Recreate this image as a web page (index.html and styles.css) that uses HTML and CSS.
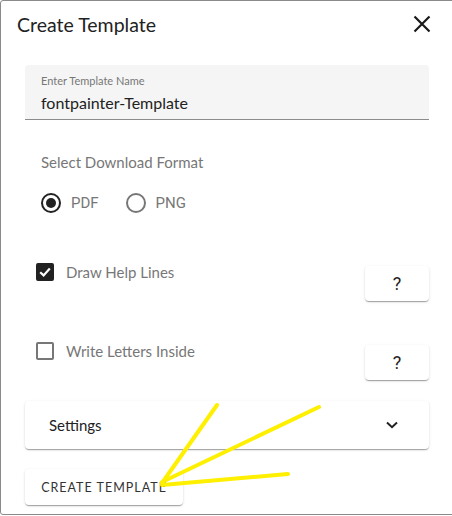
FILE: index.html
```html
<!DOCTYPE html>
<html lang="en">
<head>
    <meta charset="UTF-8">
    <meta name="viewport" content="width=device-width, initial-scale=1.0">
    <title>Create Template</title>
    <link rel="stylesheet" href="styles.css">
</head>
<body>
    <div class="dialog">
        <!-- Cabecera -->
        <div class="dialog-header">
            <h2>Create Template</h2>
            <button class="close-btn" aria-label="close">
                <svg width="18" height="18" viewBox="0 0 18 18">
                    <path d="M1.5 1.5 L16.5 16.5 M16.5 1.5 L1.5 16.5" stroke="#1a1a1a" stroke-width="2.2" fill="none"/>
                </svg>
            </button>
        </div>

        <div class="dialog-content">
            <!-- Nombre -->
            <div class="text-field">
                <label for="templateName">Enter Template Name</label>
                <input type="text" id="templateName" value="fontpainter-Template">
            </div>

            <!-- Formato -->
            <p class="format-title">Select Download Format</p>
            <div class="radio-row">
                <label class="radio">
                    <span class="radio-ring checked"><span class="radio-dot"></span></span>
                    PDF
                </label>
                <label class="radio">
                    <span class="radio-ring"></span>
                    PNG
                </label>
            </div>

            <!-- Opciones -->
            <div class="option-row first">
                <label class="check">
                    <span class="check-box checked">
                        <svg width="14" height="14" viewBox="0 0 14 14">
                            <path d="M2.2 7.2 L5.6 10.4 L11.8 3.6" stroke="#fff" stroke-width="2.2" fill="none"/>
                        </svg>
                    </span>
                    Draw Help Lines
                </label>
                <button class="help-btn">?</button>
            </div>

            <div class="option-row">
                <label class="check">
                    <span class="check-box"></span>
                    Write Letters Inside
                </label>
                <button class="help-btn">?</button>
            </div>

            <!-- Ajustes -->
            <div class="accordion">
                <span>Settings</span>
                <svg width="14" height="10" viewBox="0 0 14 10">
                    <path d="M2 2.5 L7 7.2 L12 2.5" stroke="#222" stroke-width="2" fill="none"/>
                </svg>
            </div>

            <button class="create-btn">CREATE TEMPLATE</button>
        </div>

        <!-- Flecha amarilla -->
        <svg class="arrow" width="452" height="516" viewBox="0 0 452 516">
            <g stroke="#ffef00" stroke-width="4" stroke-linecap="round" fill="none">
                <path d="M217 405 L162 483"/>
                <path d="M319 407 L162 482"/>
                <path d="M288 474 L162 485"/>
            </g>
        </svg>
    </div>
</body>
</html>
```

FILE: styles.css
```css
/* Estilos generales */
body {
    margin: 0;
    font-family: Lato, "Open Sans", sans-serif;
    background-color: #fff;
}

.dialog {
    position: relative;
    width: 460px;
    height: 515px;
    box-sizing: border-box;
    border: 1px solid #8a8a8a;
    border-radius: 3px 0 0 3px;
    background-color: #fff;
}

.dialog-header {
    display: flex;
    justify-content: space-between;
    align-items: center;
    height: 46px;
    padding: 0 21px 0 16px;
    width: 451px;
    box-sizing: border-box;
}

.dialog-header h2 {
    margin: 0;
    font-size: 19.5px;
    font-weight: 400;
    color: #222;
}

.close-btn {
    border: none;
    background: none;
    padding: 0;
    display: flex;
}

.dialog-content {
    width: 451px;
    box-sizing: border-box;
    padding: 18px 23px 0 24px;
}

/* Campo de texto */
.text-field {
    background-color: #f5f5f5;
    border-radius: 4px 4px 0 0;
    border-bottom: 1px solid #8c8c8c;
    height: 55px;
    box-sizing: border-box;
    padding: 9px 16px 0;
}

.text-field label {
    display: block;
    font-size: 11px;
    color: #777;
}

.text-field input {
    border: none;
    background: none;
    padding: 0;
    margin-top: 6px;
    font-family: inherit;
    font-size: 16px;
    color: #222;
    width: 100%;
    outline: none;
}

.format-title {
    margin: 33px 0 0 16px;
    font-size: 15px;
    color: #777;
}

/* Radios */
.radio-row {
    display: flex;
    gap: 27px;
    margin: 22px 0 0 16px;
}

.radio {
    display: flex;
    align-items: center;
    gap: 10px;
    font-family: Roboto, sans-serif;
    font-size: 15px;
    color: #777;
}

.radio-ring {
    width: 20px;
    height: 20px;
    box-sizing: border-box;
    border: 2px solid #777;
    border-radius: 50%;
    display: flex;
    justify-content: center;
    align-items: center;
}

.radio-ring.checked {
    border-color: #222;
}

.radio-dot {
    width: 10px;
    height: 10px;
    border-radius: 50%;
    background-color: #222;
}

/* Casillas */
.option-row {
    display: flex;
    justify-content: space-between;
    align-items: flex-start;
    margin-top: 41px;
}

.option-row.first {
    margin-top: 50px;
}

.check {
    display: flex;
    align-items: center;
    gap: 12px;
    margin-left: 11px;
    font-size: 15px;
    color: #777;
}

.check-box {
    width: 18px;
    height: 18px;
    box-sizing: border-box;
    border: 2px solid #777;
    border-radius: 2px;
    display: flex;
    justify-content: center;
    align-items: center;
}

.check-box.checked {
    background-color: #222;
    border-color: #222;
}

.help-btn {
    width: 64px;
    height: 35px;
    margin-top: 3px;
    border: none;
    border-radius: 4px;
    background-color: #fff;
    font-family: Roboto, sans-serif;
    font-size: 18px;
    color: #222;
    box-shadow: 0 2px 1px -1px rgba(0, 0, 0, 0.2), 0 1px 1px 0 rgba(0, 0, 0, 0.14), 0 1px 3px 0 rgba(0, 0, 0, 0.12);
}

/* Ajustes */
.accordion {
    display: flex;
    justify-content: space-between;
    align-items: center;
    height: 48px;
    margin-top: 21px;
    padding: 0 30px 0 24px;
    border-radius: 4px;
    background-color: #fff;
    font-size: 15px;
    color: #222;
    box-shadow: 0 2px 1px -1px rgba(0, 0, 0, 0.2), 0 1px 1px 0 rgba(0, 0, 0, 0.14), 0 1px 3px 0 rgba(0, 0, 0, 0.12);
}

.create-btn {
    margin-top: 20px;
    width: 158px;
    height: 36px;
    border: none;
    border-radius: 4px;
    background-color: #fff;
    font-family: inherit;
    font-size: 12.5px;
    letter-spacing: 1px;
    color: #333;
    box-shadow: 0 2px 1px -1px rgba(0, 0, 0, 0.2), 0 1px 1px 0 rgba(0, 0, 0, 0.14), 0 1px 3px 0 rgba(0, 0, 0, 0.12);
}

.arrow {
    position: absolute;
    top: -1px;
    left: -1px;
    pointer-events: none;
}
```
